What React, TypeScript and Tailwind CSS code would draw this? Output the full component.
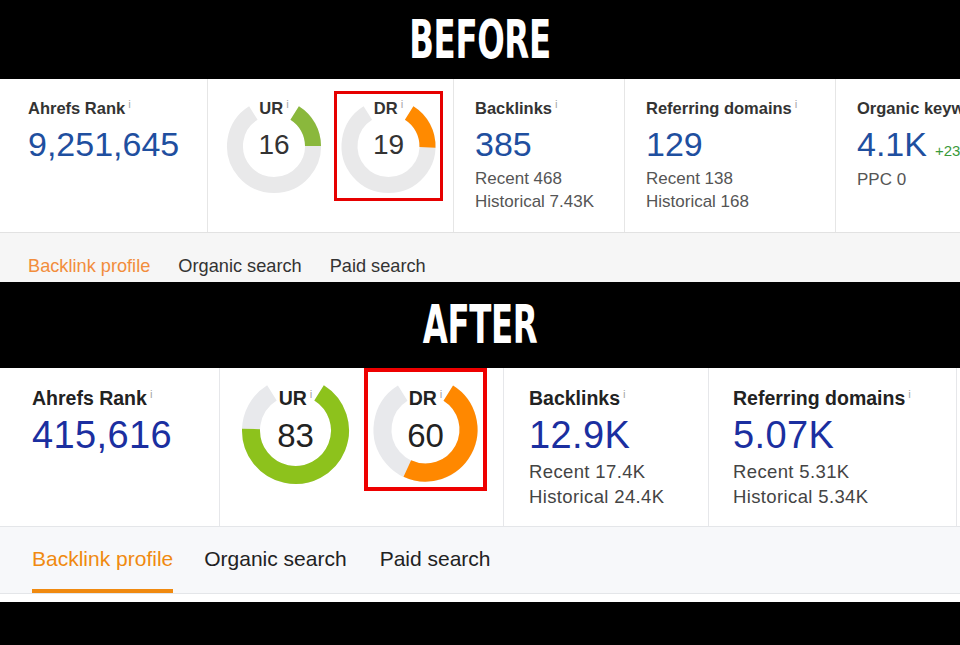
import React from "react";

// gauge geometry: angles measured clockwise from 12 o'clock
const START = 32;
const GRAY_END = 328;

function polar(cx: number, cy: number, r: number, a: number) {
  const rad = (a * Math.PI) / 180;
  return [cx + r * Math.sin(rad), cy - r * Math.cos(rad)];
}

function arc(cx: number, cy: number, r: number, a0: number, a1: number) {
  const [x0, y0] = polar(cx, cy, r, a0);
  const [x1, y1] = polar(cx, cy, r, a1);
  const large = a1 - a0 > 180 ? 1 : 0;
  return `M ${x0} ${y0} A ${r} ${r} 0 ${large} 1 ${x1} ${y1}`;
}

const ui = "font-['Liberation_Sans',Arial,sans-serif]";

function Info() {
  return <span className="ml-[3px] align-super text-[11.5px] font-normal leading-none text-[#a9a9a9]">i</span>;
}

type GaugeProps = {
  w: number;
  h: number;
  r: number;
  sw: number;
  end: number;
  color: string;
  gray: string;
  label: string;
  value: string;
  box: string;
  labelCls: string;
  valueCls: string;
};

function Gauge({ w, h, r, sw, end, color, gray, label, value, box, labelCls, valueCls }: GaugeProps) {
  const cx = w / 2;
  const cy = h / 2;
  return (
    <div className={`relative shrink-0 ${box}`}>
      <svg className="absolute inset-0" width={w} height={h} viewBox={`0 0 ${w} ${h}`}>
        <path d={arc(cx, cy, r, START, GRAY_END)} fill="none" stroke={gray} strokeWidth={sw} />
        <path d={arc(cx, cy, r, START, end)} fill="none" stroke={color} strokeWidth={sw} />
      </svg>
      <div className={`absolute inset-x-0 text-center font-bold ${labelCls}`}>
        {label}
        <Info />
      </div>
      <div className={`absolute inset-x-0 text-center ${valueCls}`}>{value}</div>
    </div>
  );
}

function Title({ children }: { children: React.ReactNode }) {
  return (
    <div className="flex flex-1 items-center justify-center">
      <span className="inline-block scale-y-[1.5] font-['DejaVu_Sans_Condensed',sans-serif] text-[36px] font-bold leading-none tracking-[-0.01em] text-white">
        {children}
      </span>
    </div>
  );
}

function BeforeStat({ label, value, lines, extra }: { label: string; value: string; lines: string[]; extra?: string }) {
  return (
    <>
      <div className="whitespace-nowrap text-[16.5px] font-bold leading-[20px] text-[#333]">
        {label}
        <Info />
      </div>
      <div className="mt-[8px] flex items-baseline gap-[8px] whitespace-nowrap">
        <span className="text-[34px] leading-[36px] text-[#1f4f9f]">{value}</span>
        {extra && <span className="text-[15px] text-[#3a9a3a]">{extra}</span>}
      </div>
      <div className="mt-[5px] text-[17px] leading-[23px] text-[#555]">
        {lines.map((l) => (
          <div key={l} className="whitespace-nowrap">{l}</div>
        ))}
      </div>
    </>
  );
}

function AfterStat({ label, value, lines }: { label: string; value: string; lines: string[] }) {
  return (
    <>
      <div className="whitespace-nowrap text-[19.5px] font-bold leading-[22px] text-[#222]">
        {label}
        <Info />
      </div>
      <div className="mt-[6px] whitespace-nowrap text-[38px] leading-[40px] tracking-[0.01em] text-[#1b2fa0]">{value}</div>
      <div className="mt-[4px] text-[18.5px] leading-[25px] tracking-[0.02em] text-[#444]">
        {lines.map((l) => (
          <div key={l} className="whitespace-nowrap">{l}</div>
        ))}
      </div>
    </>
  );
}

export default function App() {
  return (
    <div className={`flex h-[645px] w-[960px] flex-col overflow-hidden bg-black ${ui}`}>
      <div className="flex h-[79px] shrink-0">
        <Title>BEFORE</Title>
      </div>

      {/* before panel */}
      <section className="flex h-[203px] shrink-0 flex-col overflow-hidden bg-white">
        <div className="flex h-[154px] shrink-0 border-b border-[#e2e2e2]">
          <div className="w-[208px] shrink-0 border-r border-[#e6e6e6] pl-[28px] pt-[19px]">
            <BeforeStat label="Ahrefs Rank" value="9,251,645" lines={[]} />
          </div>
          <div className="flex w-[246px] shrink-0 items-start border-r border-[#e6e6e6] pl-[16px] pt-[12px]">
            <Gauge
              w={100}
              h={110}
              r={39}
              sw={16}
              end={90}
              color="#8ab83c"
              gray="#e9e9ea"
              label="UR"
              value="16"
              box="w-[100px] h-[110px]"
              labelCls="top-[7px] text-[16.5px] leading-[20px] text-[#333]"
              valueCls="top-[38px] text-[28px] leading-[32px] text-[#333]"
            />
            <div className="ml-[10px] border-[3px] border-[#e60000]">
              <Gauge
                w={103}
                h={104}
                r={39}
                sw={16}
                end={92}
                color="#ff8a00"
                gray="#e9e9ea"
                label="DR"
                value="19"
                box="w-[103px] h-[104px]"
                labelCls="top-[4px] text-[16.5px] leading-[20px] text-[#333]"
                valueCls="top-[35px] text-[28px] leading-[32px] text-[#333]"
              />
            </div>
          </div>
          <div className="w-[171px] shrink-0 border-r border-[#e6e6e6] pl-[21px] pt-[19px]">
            <BeforeStat label="Backlinks" value="385" lines={["Recent 468", "Historical 7.43K"]} />
          </div>
          <div className="w-[211px] shrink-0 border-r border-[#e6e6e6] pl-[21px] pt-[19px]">
            <BeforeStat label="Referring domains" value="129" lines={["Recent 138", "Historical 168"]} />
          </div>
          <div className="w-[200px] shrink-0 pl-[21px] pt-[19px]">
            <BeforeStat label="Organic keywords" value="4.1K" extra="+23" lines={["PPC 0"]} />
          </div>
        </div>
        <div className="flex flex-1 items-start gap-[28px] bg-[#f6f6f6] pl-[28px] pt-[22px] text-[18.2px] leading-[22px] text-[#333]">
          <span className="text-[#f28d3c]">Backlink profile</span>
          <span>Organic search</span>
          <span>Paid search</span>
        </div>
      </section>

      <div className="flex h-[86px] shrink-0">
        <Title>AFTER</Title>
      </div>

      {/* after panel */}
      <section className="flex h-[234px] shrink-0 flex-col overflow-hidden bg-white">
        <div className="flex h-[159px] shrink-0 border-b border-[#e4e6e9]">
          <div className="w-[220px] shrink-0 border-r border-[#e6e7ea] pl-[32px] pt-[19px]">
            <AfterStat label="Ahrefs Rank" value="415,616" lines={[]} />
          </div>
          <div className="flex w-[284px] shrink-0 items-start border-r border-[#e6e7ea] pl-[18px]">
            <div className="mt-[5px]">
              <Gauge
                w={115}
                h={115}
                r={44.5}
                sw={18}
                end={272}
                color="#8dc21c"
                gray="#e8e9ec"
                label="UR"
                value="83"
                box="w-[115px] h-[115px]"
                labelCls="top-[14px] text-[19.5px] leading-[22px] text-[#222]"
                valueCls="top-[45px] text-[33px] leading-[36px] text-[#222]"
              />
            </div>
            <div className="ml-[11px] border-[4px] border-[#ee0000]">
              <Gauge
                w={115}
                h={115}
                r={43}
                sw={18}
                end={205}
                color="#ff8800"
                gray="#e8e9ec"
                label="DR"
                value="60"
                box="w-[115px] h-[115px]"
                labelCls="top-[15px] text-[19.5px] leading-[22px] text-[#222]"
                valueCls="top-[46px] text-[33px] leading-[36px] text-[#222]"
              />
            </div>
          </div>
          <div className="w-[205px] shrink-0 border-r border-[#e6e7ea] pl-[25px] pt-[19px]">
            <AfterStat label="Backlinks" value="12.9K" lines={["Recent 17.4K", "Historical 24.4K"]} />
          </div>
          <div className="w-[248px] shrink-0 border-r border-[#e6e7ea] pl-[24px] pt-[19px]">
            <AfterStat label="Referring domains" value="5.07K" lines={["Recent 5.31K", "Historical 5.34K"]} />
          </div>
          <div className="flex-1" />
        </div>
        <div className="flex h-[67px] shrink-0 items-start border-b border-[#e4e6e9] bg-[#f7f8fa] pl-[32px] pt-[20px] text-[21px] leading-[24px] text-[#222]">
          <div className="flex flex-col">
            <span className="text-[#f08a10]">Backlink profile</span>
            <div className="mt-[18px] h-[4px] bg-[#f08a10]" />
          </div>
          <span className="ml-[31px]">Organic search</span>
          <span className="ml-[33px]">Paid search</span>
        </div>
      </section>
    </div>
  );
}
